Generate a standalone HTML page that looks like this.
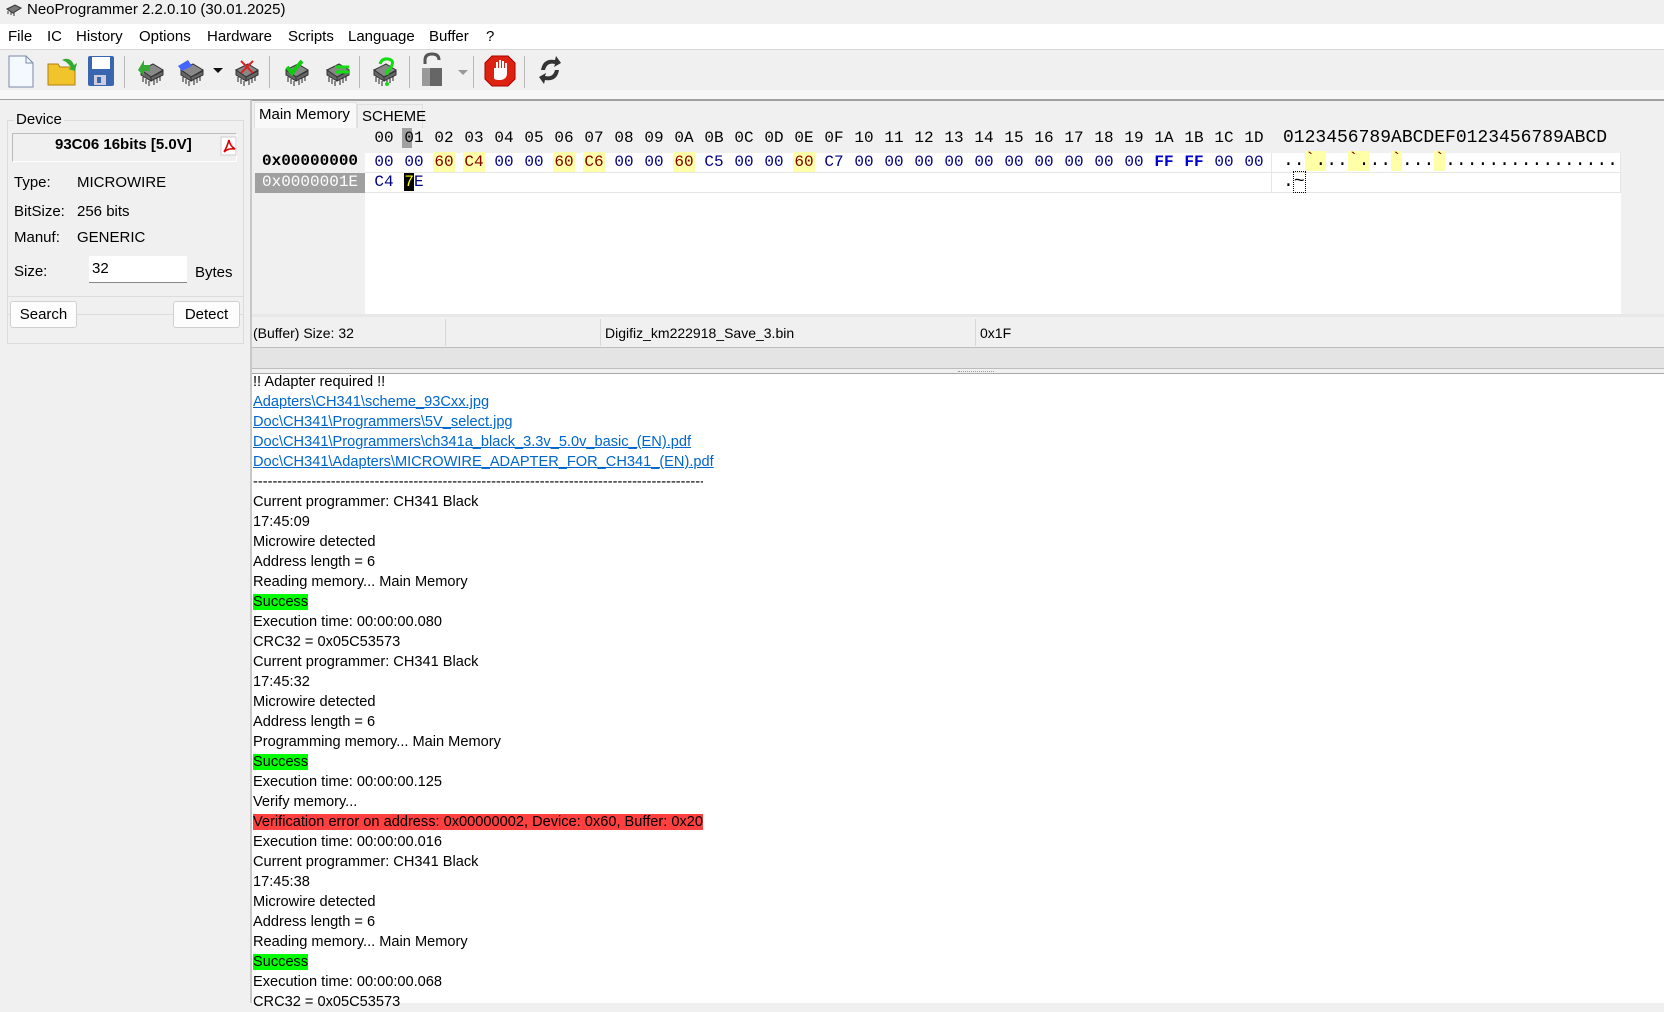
<!DOCTYPE html>
<html><head><meta charset="utf-8">
<style>
*{margin:0;padding:0;box-sizing:border-box}
body{width:1664px;height:1003px;overflow:hidden;background:#f0f0f0;font-family:"Liberation Sans",sans-serif;font-size:15px;color:#000;position:relative}
.a{position:absolute}
.t{position:absolute;white-space:nowrap;line-height:18px}
.m{font-family:"Liberation Mono",monospace;font-size:16px;line-height:20px}
.hx{position:absolute;width:22px;text-align:center;font-family:"Liberation Mono",monospace;font-size:16px;line-height:20px;height:20px}
.n{color:#000080}.r{color:#800000}.y{background:#ffffa8}
.log div{height:20px;line-height:20px;white-space:nowrap}
.lk{color:#0066cc;text-decoration:underline}
.btn{position:absolute;background:#fdfdfd;border:1px solid #d0d0d0;border-radius:3px;text-align:center;line-height:26px;font-size:15px}
.sep{position:absolute;top:56px;width:1px;height:32px;background:#b8b8b8}
</style></head><body>
<div class="a" style="left:0;top:0;width:1664px;height:24px;background:#f0f0f0"></div>
<svg class="a" style="left:5px;top:3px" width="18" height="14" viewBox="0 0 18 14"><path d="M2 6 L10 2 L16 5 L8 10Z" fill="#777" stroke="#333"/><path d="M3 8v3M6 9v3M9 10v3" stroke="#333"/></svg>
<div class="t" style="left:27px;top:1px;font-size:15px">NeoProgrammer 2.2.0.10 (30.01.2025)</div>
<div class="a" style="left:0;top:24px;width:1664px;height:25px;background:#fff"></div>
<div class="t" style="left:8px;top:28px">File</div>
<div class="t" style="left:47px;top:28px">IC</div>
<div class="t" style="left:76px;top:28px">History</div>
<div class="t" style="left:139px;top:28px">Options</div>
<div class="t" style="left:207px;top:28px">Hardware</div>
<div class="t" style="left:288px;top:28px">Scripts</div>
<div class="t" style="left:348px;top:28px">Language</div>
<div class="t" style="left:429px;top:28px">Buffer</div>
<div class="t" style="left:486px;top:28px">?</div>
<div class="a" style="left:0;top:49px;width:1664px;height:1px;background:#d8d8d8"></div>
<svg class="a" style="left:0;top:52px" width="580" height="40" viewBox="0 52 580 40">
 <path d="M9 56h17l7 7v24H9z" fill="#f4f8ff" stroke="#7a8aa8"/><path d="M26 56v7h7" fill="none" stroke="#7a8aa8"/>
 <path d="M48 64h10l2 3h15v18H48z" fill="#f2c42c" stroke="#b08010"/><path d="M62 60q8-4 12 5l3-2-2 8-7-2 3-1q-3-6-9-8z" fill="#3a3"/>
 <rect x="88" y="56" width="26" height="30" rx="2" fill="#3a66b0"/><rect x="92" y="57" width="18" height="12" fill="#fff"/><rect x="94" y="75" width="12" height="10" fill="#ccd"/><rect x="97" y="77" width="4" height="6" fill="#3a66b0"/>
 <g id="c"><path d="M141 70l12-6 10 6-12 7z" fill="#888" stroke="#333"/><path d="M141 70v5l10 6v-4zM151 77l12-6v4l-12 6z" fill="#666" stroke="#333"/><path d="M143 77v5M146 79v5M149 81v5M154 80v5M157 78v5M160 76v5" stroke="#222"/></g>
 <path d="M138 70l6-10 0 5 6 0 0 6-6 0 0 5z" fill="#3a3"/>
 <use href="#c" x="40"/><path d="M178 66l10-6 4 6-10 5z" fill="#46f"/>
 <path d="M213 68h10l-5 5z" fill="#111"/>
 <use href="#c" x="95"/><path d="M241 61l12 12M253 61l-12 12" stroke="#d22" stroke-width="2"/>
 <use href="#c" x="145"/><path d="M287 67l5 6 10-12" stroke="#1c1" stroke-width="4" fill="none"/>
 <use href="#c" x="186"/><path d="M335 67h14M335 72h14" stroke="#1d1" stroke-width="3"/>
 <use href="#c" x="233"/><path d="M380 64q2-6 8-5t4 6-5 6v4" stroke="#1d1" stroke-width="3" fill="none"/><circle cx="387" cy="84" r="2" fill="#1d1"/>
 <path d="M425 64v-4q0-6 7-6t7 6" stroke="#555" stroke-width="3" fill="none"/><rect x="422" y="68" width="20" height="18" fill="#666"/><rect x="422" y="68" width="8" height="18" fill="#999"/>
 <path d="M458 70h10l-5 5z" fill="#999"/>
 <path d="M492 56h16l7 7v16l-7 7h-16l-7-7V63z" fill="#d21" stroke="#a00"/><path d="M494 78v-10h2v-6h2v6h1v-8h2v8h1v-7h2v7h1v-5h2v10q0 6-6 7h-2q-5 0-5-2z" fill="#fff"/>
 <path d="M541 70q2-12 14-10l1-4 5 7-7 4 1-3q-8-2-10 6zM559 70q-2 12-14 10l-1 4-5-7 7-4-1 3q8 2 10-6z" fill="#333"/>
</svg>
<div class="sep" style="left:124px"></div><div class="sep" style="left:269px"></div><div class="sep" style="left:359px"></div><div class="sep" style="left:409px"></div><div class="sep" style="left:473px"></div><div class="sep" style="left:524px"></div>
<div class="a" style="left:0;top:90px;width:1664px;height:9px;background:#f8f8f8"></div>
<div class="a" style="left:0;top:99px;width:1664px;height:1px;background:#a0a0a0"></div>
<div class="a" style="left:250px;top:100px;width:2px;height:903px;background:#c8c8c8"></div>
<div class="a" style="left:7px;top:120px;width:237px;height:195px;border:1px solid #dcdcdc"></div>
<div class="t" style="left:14px;top:111px;background:#f0f0f0;padding:0 2px">Device</div>
<div class="a" style="left:12px;top:133px;width:225px;height:29px;border:1px solid #bcbcbc;border-right-color:#fff;border-bottom-color:#fff"></div>
<div class="t" style="left:55px;top:136px;font-weight:bold">93C06 16bits [5.0V]</div>
<svg class="a" style="left:220px;top:136px" width="18" height="20" viewBox="0 0 18 20"><rect x="1" y="1" width="15" height="18" fill="#fff" stroke="#ccc"/><path d="M4 16q3-5 5-12q1 6 6 9q-7-1-11 3" fill="none" stroke="#d00" stroke-width="1.6"/></svg>
<div class="t" style="left:14px;top:174px">Type:</div><div class="t" style="left:77px;top:174px">MICROWIRE</div>
<div class="t" style="left:14px;top:203px">BitSize:</div><div class="t" style="left:77px;top:203px">256 bits</div>
<div class="t" style="left:14px;top:229px">Manuf:</div><div class="t" style="left:77px;top:229px">GENERIC</div>
<div class="t" style="left:14px;top:263px">Size:</div>
<div class="a" style="left:89px;top:256px;width:98px;height:27px;background:#fff;border-bottom:1px solid #888"></div>
<div class="t" style="left:92px;top:260px">32</div>
<div class="t" style="left:195px;top:264px">Bytes</div>
<div class="a" style="left:7px;top:296px;width:237px;height:48px;border:1px solid #dcdcdc"></div>
<div class="btn" style="left:10px;top:301px;width:67px;height:27px">Search</div>
<div class="btn" style="left:173px;top:301px;width:67px;height:27px">Detect</div>
<div class="a" style="left:252px;top:100px;width:1412px;height:1px;background:#a0a0a0"></div>
<div class="a" style="left:254px;top:102px;width:103px;height:26px;background:#f9f9f9;border:1px solid #e0e0e0;border-bottom:none"></div>
<div class="t" style="left:259px;top:106px">Main Memory</div>
<div class="a" style="left:357px;top:104px;width:66px;height:24px;border:1px solid #e0e0e0;border-bottom:none"></div>
<div class="t" style="left:362px;top:108px">SCHEME</div>
<div class="a" style="left:365px;top:153px;width:1256px;height:161px;background:#fff"></div>
<div class="a" style="left:1271px;top:153px;width:1px;height:40px;background:#e6e6e6"></div>
<div class="a" style="left:1620px;top:153px;width:1px;height:40px;background:#e6e6e6"></div>
<div class="a" style="left:365px;top:172px;width:1256px;height:1px;background:#e6e6e6"></div>
<div class="a" style="left:365px;top:192px;width:1256px;height:1px;background:#e6e6e6"></div>
<div class="a" style="left:255px;top:173px;width:110px;height:20px;background:#a0a0a0"></div>
<div class="t m" style="left:262px;top:151px;font-weight:bold">0x00000000</div>
<div class="t m" style="left:262px;top:172px;color:#fff">0x0000001E</div>
<div class="a" style="left:402px;top:128px;width:10px;height:20px;background:#a0a0a0"></div>
<div id="g"></div>
<div class="t" style="left:1283px;top:128px;font-family:'Liberation Mono',monospace;font-size:18px;line-height:20px">0123456789ABCDEF0123456789ABCD</div>
<div class="t" style="left:1283px;top:151px;font-family:'Liberation Mono',monospace;font-size:18px;line-height:20px"><span>..</span><span class="y r">`</span><span class="y">.</span><span>..</span><span class="y r">`</span><span class="y">.</span><span>..</span><span class="y r">`</span><span>...</span><span class="y r">`</span><span>................</span></div>
<div class="t" style="left:1283px;top:172px;font-family:'Liberation Mono',monospace;font-size:18px;line-height:20px">.<span style="outline:1px dotted #000">~</span></div>
<div class="a" style="left:252px;top:314px;width:1412px;height:3px;background:#e8e8e8"></div>
<div class="a" style="left:252px;top:347px;width:1412px;height:1px;background:#bdbdbd"></div>
<div class="a" style="left:445px;top:319px;width:1px;height:27px;background:#d8d8d8"></div>
<div class="a" style="left:600px;top:319px;width:1px;height:27px;background:#d8d8d8"></div>
<div class="a" style="left:975px;top:319px;width:1px;height:27px;background:#d8d8d8"></div>
<div class="t" style="left:253px;top:324px;font-size:14px">(Buffer) Size: 32</div>
<div class="t" style="left:605px;top:324px;font-size:14px">Digifiz_km222918_Save_3.bin</div>
<div class="t" style="left:980px;top:324px;font-size:14px">0x1F</div>
<div class="a" style="left:252px;top:348px;width:1412px;height:20px;background:#e4e4e4"></div>
<div class="a" style="left:252px;top:368px;width:1412px;height:1px;background:#bdbdbd"></div>
<div class="a" style="left:958px;top:371px;width:36px;height:1px;border-top:1px dotted #999"></div>
<div class="a" style="left:252px;top:373px;width:1412px;height:1px;background:#a8a8a8"></div>
<div class="a" style="left:252px;top:374px;width:1412px;height:629px;background:#fff"></div>
<div class="a log" style="left:253px;top:372px;font-size:14.6px">
<div>!! Adapter required !!</div>
<div class="lk">Adapters\CH341\scheme_93Cxx.jpg</div>
<div class="lk">Doc\CH341\Programmers\5V_select.jpg</div>
<div class="lk">Doc\CH341\Programmers\ch341a_black_3.3v_5.0v_basic_(EN).pdf</div>
<div class="lk">Doc\CH341\Adapters\MICROWIRE_ADAPTER_FOR_CH341_(EN).pdf</div>
<div style="width:450px;overflow:hidden">------------------------------------------------------------------------------------------------------------</div>
<div>Current programmer: CH341 Black</div>
<div>17:45:09</div>
<div>Microwire detected</div>
<div>Address length = 6</div>
<div>Reading memory... Main Memory</div>
<div><span style="background:#00ff00">Success</span></div>
<div>Execution time: 00:00:00.080</div>
<div>CRC32 = 0x05C53573</div>
<div>Current programmer: CH341 Black</div>
<div>17:45:32</div>
<div>Microwire detected</div>
<div>Address length = 6</div>
<div>Programming memory... Main Memory</div>
<div><span style="background:#00ff00">Success</span></div>
<div>Execution time: 00:00:00.125</div>
<div>Verify memory...</div>
<div><span style="background:#ff4040">Verification error on address: 0x00000002, Device: 0x60, Buffer: 0x20</span></div>
<div>Execution time: 00:00:00.016</div>
<div>Current programmer: CH341 Black</div>
<div>17:45:38</div>
<div>Microwire detected</div>
<div>Address length = 6</div>
<div>Reading memory... Main Memory</div>
<div><span style="background:#00ff00">Success</span></div>
<div>Execution time: 00:00:00.068</div>
<div>CRC32 = 0x05C53573</div>
</div>
<script>
var h=["00","01","02","03","04","05","06","07","08","09","0A","0B","0C","0D","0E","0F","10","11","12","13","14","15","16","17","18","19","1A","1B","1C","1D"];
var r=["00","00","60","C4","00","00","60","C6","00","00","60","C5","00","00","60","C7","00","00","00","00","00","00","00","00","00","00","FF","FF","00","00"];
var s="";
for(var i=0;i<30;i++){var x=373+i*30;
s+='<div class="hx" style="left:'+x+'px;top:128px">'+h[i]+'</div>';
var c=r[i],cl=(c=="60"||c=="C4"||c=="C6")?"r y":"n";
s+='<div class="hx '+cl+'" style="left:'+x+'px;top:152px;'+(c=="FF"?"font-weight:bold;color:#00c":"")+'">'+c+'</div>';}
s+='<div class="hx n" style="left:373px;top:172px">C4</div>';
s+='<div class="hx" style="left:403px;top:172px;color:#000080"><span style="background:#000;color:#ff0">7</span>E</div>';
document.getElementById("g").innerHTML=s;
</script>
</body></html>
